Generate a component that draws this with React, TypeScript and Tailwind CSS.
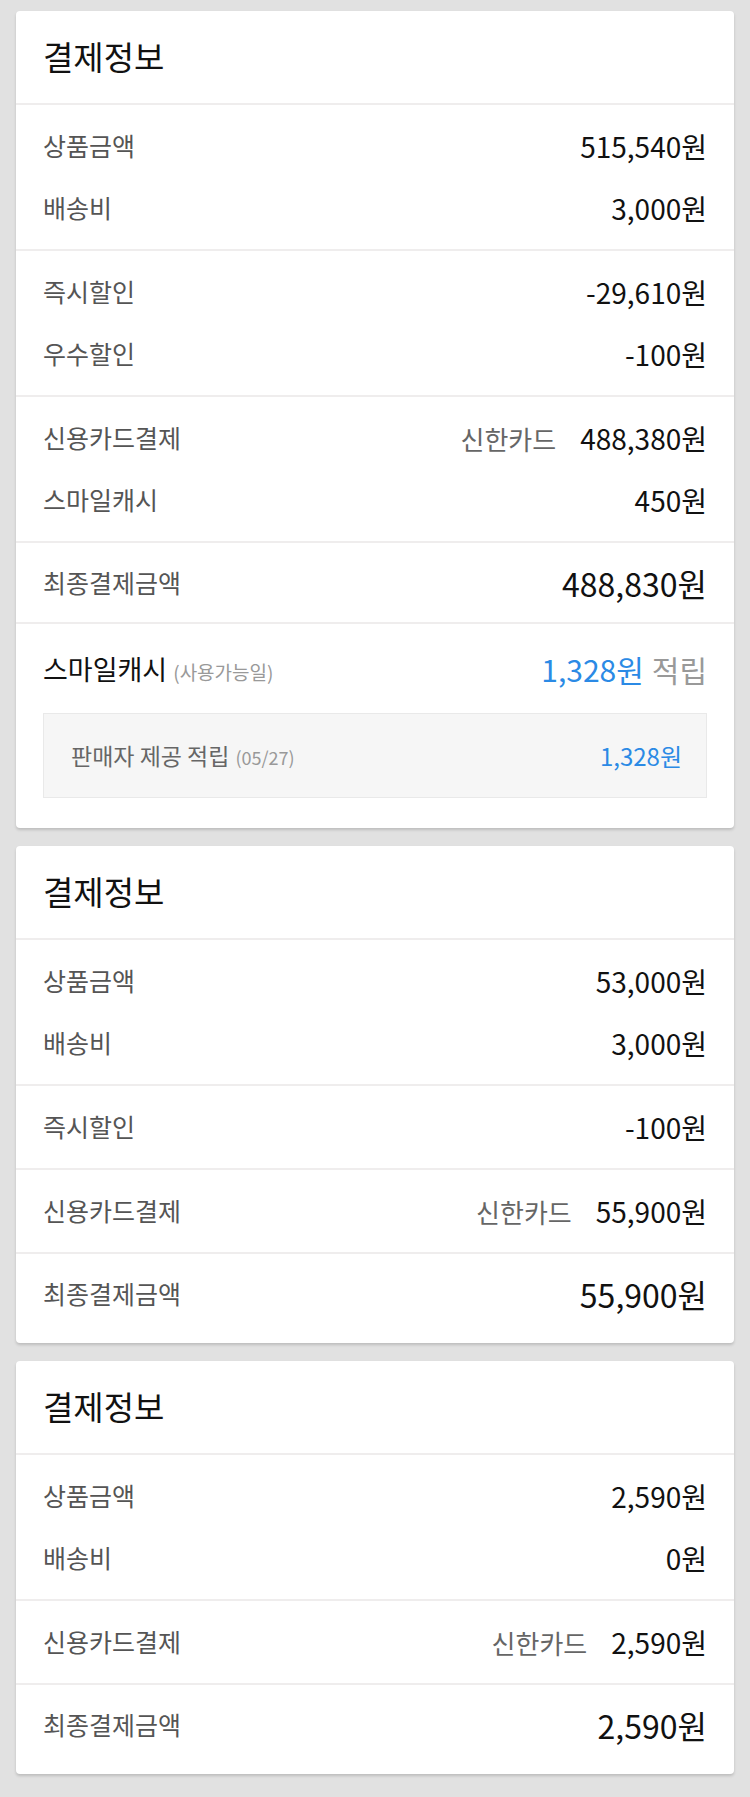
import React from "react";

type Row = {
  label: string;
  value: string;
  sub?: string;
};

type Card = {
  sections: Row[][];
  total: string;
  cashback?: { amount: string; seller: string; date: string };
};

const cards: Card[] = [
  {
    sections: [
      [
        { label: "상품금액", value: "515,540원" },
        { label: "배송비", value: "3,000원" },
      ],
      [
        { label: "즉시할인", value: "-29,610원" },
        { label: "우수할인", value: "-100원" },
      ],
      [
        { label: "신용카드결제", value: "488,380원", sub: "신한카드" },
        { label: "스마일캐시", value: "450원" },
      ],
    ],
    total: "488,830원",
    cashback: { amount: "1,328원", seller: "1,328원", date: "(05/27)" },
  },
  {
    sections: [
      [
        { label: "상품금액", value: "53,000원" },
        { label: "배송비", value: "3,000원" },
      ],
      [{ label: "즉시할인", value: "-100원" }],
      [{ label: "신용카드결제", value: "55,900원", sub: "신한카드" }],
    ],
    total: "55,900원",
  },
  {
    sections: [
      [
        { label: "상품금액", value: "2,590원" },
        { label: "배송비", value: "0원" },
      ],
      [{ label: "신용카드결제", value: "2,590원", sub: "신한카드" }],
    ],
    total: "2,590원",
  },
];

const PaymentCard: React.FC<{ card: Card }> = ({ card }) => {
  return (
    <div
      className={`bg-white rounded-[4px] shadow-[0_2px_3px_rgba(0,0,0,0.16)] ${
        card.cashback ? "" : "pb-[10px]"
      }`}
    >
      <div className="h-[92px] px-[27px] flex items-center text-[33px] text-[#111]">결제정보</div>

      {card.sections.map((rows, i) => (
        <div key={i} className="border-t-2 border-[#efeded] py-[10px] px-[27px]">
          {rows.map((row) => (
            <div key={row.label} className="h-[62px] flex items-center justify-between">
              <span className="text-[25px] text-[#555]">{row.label}</span>
              <div className="flex items-center">
                {row.sub && <span className="text-[26px] text-[#666] mr-[24px]">{row.sub}</span>}
                <span className="text-[28px] text-[#111]">{row.value}</span>
              </div>
            </div>
          ))}
        </div>
      ))}

      {/* 최종결제금액 */}
      <div className="border-t-2 border-[#efeded] py-[9px] px-[27px]">
        <div className="h-[61px] flex items-center justify-between">
          <span className="text-[25px] text-[#555]">최종결제금액</span>
          <span className="text-[32px] text-[#111]">{card.total}</span>
        </div>
      </div>

      {card.cashback && (
        <div className="border-t-2 border-[#efeded] pt-[14px] pb-[30px] px-[27px]">
          <div className="h-[62px] flex items-center justify-between">
            <div className="flex items-baseline">
              <span className="text-[27px] text-[#111]">스마일캐시</span>
              <span className="text-[19px] text-[#999] ml-[6px]">(사용가능일)</span>
            </div>
            <div className="flex items-baseline text-[30px]">
              <span className="text-[#2b8ae5]">{card.cashback.amount}</span>
              <span className="text-[#999] ml-[8px]">적립</span>
            </div>
          </div>
          <div className="mt-[13px] h-[85px] bg-[#f6f6f6] border border-[#e9e9e9] flex items-center justify-between pl-[27px] pr-[24px]">
            <div className="flex items-baseline">
              <span className="text-[23px] text-[#666]">판매자 제공 적립</span>
              <span className="text-[18px] text-[#999] ml-[6px]">{card.cashback.date}</span>
            </div>
            <span className="text-[24px] text-[#2b8ae5]">{card.cashback.seller}</span>
          </div>
        </div>
      )}
    </div>
  );
};

export default function App() {
  return (
    <div
      className="min-h-screen bg-[#e1e1e1] pt-[11px] pb-5 px-4 flex flex-col gap-[18px]"
      style={{ fontFamily: '"Noto Sans CJK KR", "Noto Sans", sans-serif' }}
    >
      {cards.map((card, i) => (
        <PaymentCard key={i} card={card} />
      ))}
    </div>
  );
}
